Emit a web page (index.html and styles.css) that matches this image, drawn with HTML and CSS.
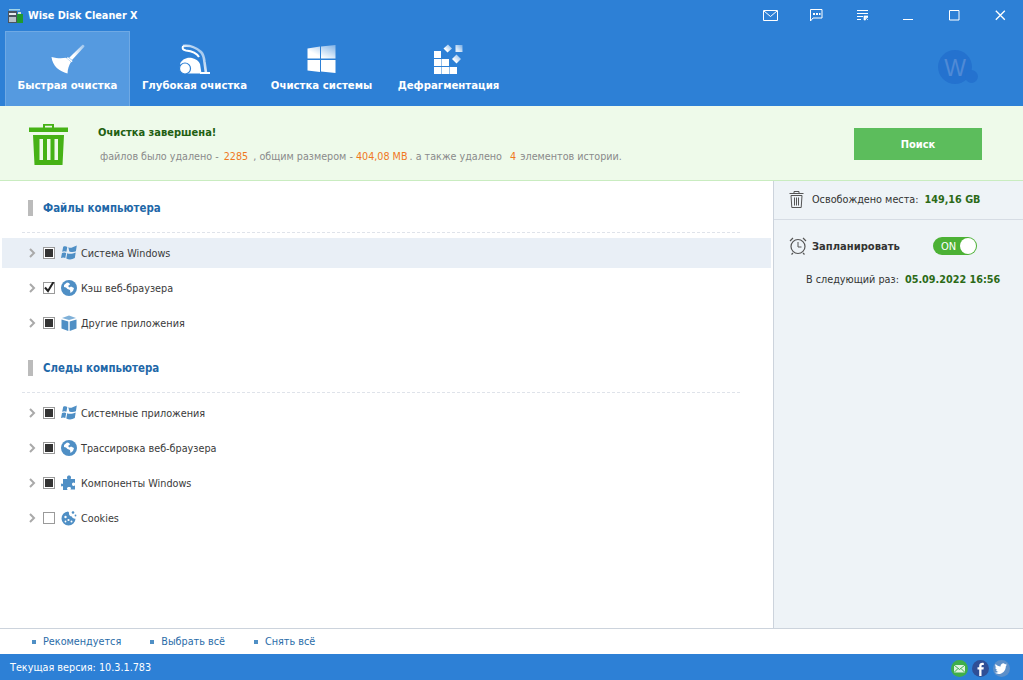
FILE: index.html
```html
<!DOCTYPE html>
<html lang="ru">
<head>
<meta charset="utf-8">
<title>Wise Disk Cleaner X</title>
<link rel="stylesheet" href="styles.css">
</head>
<body>
<svg class="defs" width="0" height="0" aria-hidden="true">
  <defs>
    <linearGradient id="fade" x1="0" y1="1" x2="1" y2="0"><stop offset="0.3" stop-color="#fff"/><stop offset="1" stop-color="#fff" stop-opacity=".4"/></linearGradient>
    <symbol id="i-win" viewBox="0 0 16 16"><path d="M2.200 1.800C3.500 1.200 4.900 1.200 6.300 1.900L5.400 6.800C4 6.100 2.600 6.100 1.200 6.800zM7.300 2.300C8.800 3 10.300 3 11.600 2.300L15.800.4 14.900 6.300C13 7.200 10.400 7.300 8.300 6.400zM1 7.900C2.400 7.200 3.900 7.200 5.200 7.900L4.300 13C3 12.300 1.500 12.300 0 13zM6.200 8.300C8 9.100 11.500 9.200 14.700 7.500L13.800 13C11 14.800 8 14.900 5.300 13.600z" fill="#4f8fc5"/></symbol>
    <symbol id="i-globe" viewBox="0 0 16 16"><circle cx="8" cy="8" r="8" fill="#4f8fc5"/><path d="M3 5l3-2.500 2 .5 1 1.500-2 1.500 1.500 1.500 1.500-1 3 1.500-1 3-2.500 2-.5-3-2.500-1-1.500-1.500-2-.5z" fill="#fff"/></symbol>
    <symbol id="i-box" viewBox="0 0 16 16"><path d="M1 3l7-2.500L15 3 8 5z" fill="#7fb0d8"/><path d="M.5 4.500L7.300 6.500V16L.5 13.500zM15.500 4.500L8.700 6.500V16l6.800-2.500z" fill="#4f8fc5"/></symbol>
    <symbol id="i-puzzle" viewBox="0 0 16 16"><path d="M6 2.500C6 1 7 .5 8 .5s2 .6 2 2c0 .8-.3 1-.3 1.500H14v4c-.5 0-.8-.5-1.500-.5-.9 0-1.500.8-1.500 1.800s.6 1.700 1.500 1.700c.7 0 1-.5 1.500-.5v4H9.500c0-.5.500-.8.500-1.500C10 12.500 9.200 12 8 12s-2 .5-2 1.500c0 .7.500 1 .5 1.500H2v-4c-.5 0-.8.500-1.200.5C.3 11.500 0 10.800 0 10s.3-1.500.8-1.500c.4 0 .7.500 1.200.500V4h4.300C6.300 3.500 6 3.300 6 2.500z" fill="#4f8fc5"/></symbol>
    <symbol id="i-cookie" viewBox="0 0 16 16"><path d="M7 1.500a7 7 0 1 0 7.500 7.200C13 9 11 8 11 6.500 9 6.500 7.500 4.500 8 2.500z" fill="#4f8fc5"/><circle cx="4.500" cy="7" r="1.200" fill="#fff"/><circle cx="7.500" cy="10" r="1.100" fill="#fff"/><circle cx="4.500" cy="11.500" r=".9" fill="#fff"/><circle cx="10.500" cy="11.500" r="1" fill="#fff"/><circle cx="12" cy="2.500" r="1.300" fill="#4f8fc5"/><circle cx="14.500" cy="5.500" r=".9" fill="#4f8fc5"/></symbol>
    <symbol id="i-chev" viewBox="0 0 8 10"><path d="M2 1l4 4-4 4" fill="none" stroke="#a9a9a9" stroke-width="2"/></symbol>
  </defs>
</svg>
<div class="app">
  <header class="top">
    <div class="titlebar">
      <svg class="appicon" viewBox="0 0 16 16" width="16" height="16"><path d="M2 1h11v1.500H2z" fill="#9fd4e8"/><rect x="1" y="3" width="9" height="12" fill="#4b5560"/><rect x="2" y="5" width="7" height="2" fill="#e8edf0"/><rect x="2" y="9" width="7" height="5" fill="#b8c2ca"/><rect x="10" y="6" width="6" height="9" fill="#1f9a2e"/><rect x="11" y="4" width="3" height="2" fill="#cfe8cf"/></svg>
      <span class="apptitle">Wise Disk Cleaner X</span>
      <div class="winbtns">
        <span class="winbtn"><svg width="15" height="11" viewBox="0 0 15 11"><path d="M.5.500h14v10H.5zM1 1l6.500 5.500L14 1" fill="none" stroke="#fff"/></svg></span>
        <span class="winbtn"><svg width="13" height="13" viewBox="0 0 13 13"><path d="M.5 12V.5h11.500v8.500H3z" fill="none" stroke="#fff"/><path d="M3 4h2v2H3zM6 4h2v2H6zM9 4h1.500v2H9z" fill="#fff"/></svg></span>
        <span class="winbtn"><svg width="11" height="11" viewBox="0 0 11 11"><path d="M0 .5h11M0 3.500h11M0 6.500h6M0 9.500h4" stroke="#fff" fill="none"/><path d="M7 6h4v1.500H8.500V10H7zM9 8l2 2" stroke="#fff" stroke-width=".7" fill="#fff"/></svg></span>
        <span class="winbtn"><svg width="11" height="11" viewBox="0 0 11 11"><path d="M0 9.500h10" stroke="#fff" fill="none"/></svg></span>
        <span class="winbtn"><svg width="11" height="11" viewBox="0 0 11 11"><path d="M.5.500h9.500v9.500H.5z" stroke="#fff" fill="none"/></svg></span>
        <span class="winbtn"><svg width="11" height="11" viewBox="0 0 11 11"><path d="M.8.800l9 9M9.800.800l-9 9" stroke="#fff" stroke-width="1.300" fill="none"/></svg></span>
      </div>
    </div>
    <nav class="tabs">
      <div class="tab active">
        <svg class="tabicon" viewBox="0 0 34 34" width="34" height="34"><path d="M31.500.8c1.200-.4 2.300.8 1.800 1.900L21 16l-2.800-2.300z" fill="url(#fade)"/><path d="M16.800 13l4.800 4-1 1.300-4.800-4z" fill="#fff"/><path d="M.5 13c5.500 1.500 10.500 1.500 14.500.8l5 4.200c-2 3-3.300 7-3.500 11.500C8.500 27.500 1.500 22 .5 13z" fill="#fff"/></svg>
        <span class="tablabel">Быстрая очистка</span>
      </div>
      <div class="tab">
        <svg class="tabicon" viewBox="0 0 34 34" width="34" height="34"><path d="M5 2C12 1 19 4 23 8c2 2 3 5 3.500 10L28 29" fill="none" stroke="url(#fade)" stroke-width="2.600"/><path d="M5 2C4 5 5 6 8 6.500c5 .5 10 1.500 13 6.500" fill="none" stroke="#fff" stroke-width="2"/><path d="M2 20c2-5 7-7 12-6 4 1 7 3 8 6l1.500 9.500H8z" fill="#fff"/><circle cx="7" cy="24.500" r="5.500" fill="#fff" stroke="#2d80d6" stroke-width="1.200"/><path d="M22 29h10" stroke="#fff" stroke-width="2"/></svg>
        <span class="tablabel">Глубокая очистка</span>
      </div>
      <div class="tab">
        <svg class="tabicon" viewBox="0 0 34 34" width="34" height="34"><path d="M2.500 4.500L15 2.600V14.500H2.500zM16 2.400L30.500 1V14.500H16z" fill="url(#fade)"/><path d="M2.500 16H15v12L2.500 26.500zM16 16h14.500v13L16 27.500z" fill="#fff"/></svg>
        <span class="tablabel">Очистка системы</span>
      </div>
      <div class="tab">
        <svg class="tabicon" viewBox="0 0 34 34" width="34" height="34"><path d="M2 7h7v7H2zM2 15h7v7H2zM9.500 15H17v7H9.500zM2 23h7v7H2zM9.500 23H17v7H9.500zM17.500 23H25v7h-7.500z" fill="#fff"/><path d="M11.500 4.500L16 .5l4 4-4.500 4z" fill="url(#fade)"/><path d="M23.500 1h7v7h-7z" fill="url(#fade)" opacity=".85"/><path d="M20 15l4.500-4.500L29 15l-4.500 4.500z" fill="url(#fade)"/></svg>
        <span class="tablabel">Дефрагментация</span>
      </div>
      <div class="logo">
        <span class="logodisc">W</span>
        <span class="logodot"></span>
      </div>
    </nav>
  </header>

  <section class="banner">
    <svg class="bin" viewBox="0 0 39 41" width="39" height="41"><path d="M15 4V.8h9V4" fill="none" stroke="#46b216" stroke-width="2"/><path d="M0 3.500h39v4.500H0z" fill="#46b216"/><path d="M4 11h31l-1.500 30h-28zM10.500 15v21h3.500V15zM18 15v21h3.500V15zM25.500 15v21H29V15z" fill="#46b216" fill-rule="evenodd"/></svg>
    <div class="bannertext">
      <div class="donetitle">Очистка завершена!</div>
      <div class="donestats">файлов было удалено - <b>2285</b> , общим размером - <b class="size">404,08 MB</b> . а также удалено <b class="four">4</b> элементов истории.</div>
    </div>
    <button class="search">Поиск</button>
  </section>

  <main class="content">
    <div class="lists">
      <section class="group">
        <h2 class="grouphead"><span class="groupname">Файлы компьютера</span></h2>
        <div class="row selected"><svg class="chev"><use href="#i-chev"/></svg><span class="check mixed"></span><svg class="ico"><use href="#i-win"/></svg><span class="rowlabel">Система Windows</span></div>
        <div class="row"><svg class="chev"><use href="#i-chev"/></svg><span class="check"><svg width="12" height="12" viewBox="0 0 12 12"><path d="M2 5.500l3 3.500 5.500-9" fill="none" stroke="#222" stroke-width="2"/></svg></span><svg class="ico"><use href="#i-globe"/></svg><span class="rowlabel">Кэш веб-браузера</span></div>
        <div class="row"><svg class="chev"><use href="#i-chev"/></svg><span class="check mixed"></span><svg class="ico"><use href="#i-box"/></svg><span class="rowlabel">Другие приложения</span></div>
      </section>
      <section class="group">
        <h2 class="grouphead"><span class="groupname">Следы компьютера</span></h2>
        <div class="row"><svg class="chev"><use href="#i-chev"/></svg><span class="check mixed"></span><svg class="ico"><use href="#i-win"/></svg><span class="rowlabel">Системные приложения</span></div>
        <div class="row"><svg class="chev"><use href="#i-chev"/></svg><span class="check mixed"></span><svg class="ico"><use href="#i-globe"/></svg><span class="rowlabel">Трассировка веб-браузера</span></div>
        <div class="row"><svg class="chev"><use href="#i-chev"/></svg><span class="check mixed"></span><svg class="ico"><use href="#i-puzzle"/></svg><span class="rowlabel">Компоненты Windows</span></div>
        <div class="row"><svg class="chev"><use href="#i-chev"/></svg><span class="check"></span><svg class="ico"><use href="#i-cookie"/></svg><span class="rowlabel">Cookies</span></div>
      </section>
    </div>
    <aside class="side">
      <div class="freed">
        <svg width="15" height="17" viewBox="0 0 15 17"><path d="M5 2V.5h5V2M.5 2.500h14M2 4.500h11l-.8 12H2.800zM5.500 6.500v8M7.500 6.500v8M9.500 6.500v8" fill="none" stroke="#555"/></svg>
        <span class="sidetext">Освобождено места:</span>
        <b class="greenval">149,16 GB</b>
      </div>
      <div class="sched">
        <div class="schedrow">
          <svg width="18" height="18" viewBox="0 0 18 18"><circle cx="9" cy="9.500" r="7" fill="none" stroke="#555" stroke-width="1.200"/><path d="M9 5v5H12.500" fill="none" stroke="#555"/><path d="M1 4l3-3M17 4l-3-3M4 16l-1.500 1.500M14 16l1.500 1.500" stroke="#555" stroke-width="1.200"/></svg>
          <b class="schedname">Запланировать</b>
          <span class="toggle"><span class="toggletext">ON</span><span class="knob"></span></span>
        </div>
        <div class="nextrun"><span class="sidetext">В следующий раз:</span><b class="greenval">05.09.2022 16:56</b></div>
      </div>
    </aside>
  </main>

  <div class="links">
    <a class="link">Рекомендуется</a>
    <a class="link">Выбрать всё</a>
    <a class="link">Снять всё</a>
  </div>

  <footer class="status">
    <span>Текущая версия: 10.3.1.783</span>
    <div class="social">
      <svg width="17" height="17" viewBox="0 0 17 17"><circle cx="8.500" cy="8.500" r="8.500" fill="#3fae49"/><path d="M3 5h11v7.500H3z" fill="#dff3df"/><path d="M3 5l5.500 4.500L14 5M3 12.500L7 8.500M14 12.500L10 8.500" fill="none" stroke="#3fae49"/></svg>
      <svg width="17" height="17" viewBox="0 0 17 17"><circle cx="8.500" cy="8.500" r="8.500" fill="#2f4f96"/><path d="M9.500 16V9.500h2l.3-2.300H9.500V6c0-.7.3-1.100 1.100-1.100h1.200V2.900c-2.900-.4-4.600.4-4.600 2.900v1.400H5.500v2.300h1.700V16z" fill="#fff"/></svg>
      <svg width="17" height="17" viewBox="0 0 17 17"><circle cx="8.500" cy="8.500" r="8.500" fill="#5c8fc9"/><path d="M14 4.500c-.5.300-1 .4-1.500.5.500-.3.900-.8 1.100-1.400-.5.300-1 .5-1.600.6a2.600 2.600 0 0 0-4.400 2.400C5.500 6.500 3.800 5.600 2.600 4.100c-.7 1.200-.3 2.700.8 3.500-.4 0-.8-.1-1.100-.3 0 1.300.9 2.300 2 2.600-.4.100-.8.100-1.200 0 .3 1 1.300 1.800 2.400 1.800-1.100.9-2.400 1.200-3.800 1.100 4.500 2.800 11 .3 11.200-6.900.5-.4.900-.8 1.100-1.400z" fill="#fff"/></svg>
    </div>
  </footer>
</div>
</body>
</html>
```
FILE: styles.css
```css
* { box-sizing: border-box; }
html, body { margin: 0; height: 100%; }
body {
  font-family: "DejaVu Sans Condensed", "DejaVu Sans", sans-serif;
  font-stretch: condensed;
  font-size: 10.75px;
  color: #333;
  overflow: hidden;
}
.defs { position: absolute; }
.app { width: 1023px; height: 680px; display: flex; flex-direction: column; }

.top { background: #2d80d6; height: 106px; color: #fff; flex: none; }
.titlebar { height: 31px; display: flex; align-items: center; padding-left: 7px; }
.appicon { margin-right: 5px; }
.apptitle { font-weight: 700; font-size: 10.8px; }
.winbtns { margin-left: auto; display: flex; }
.winbtn { width: 46px; height: 31px; display: flex; align-items: center; justify-content: center; }

.tabs { height: 75px; display: flex; padding-left: 5px; gap: 2px; }
.tab { width: 125px; display: flex; flex-direction: column; align-items: center; padding-top: 12px; border: 1px solid transparent; border-bottom: 0; }
.tab.active { background: #559ae0; border-color: #6fa9e4; }
.tabicon { display: block; }
.tablabel { margin-top: 1px; font-weight: 700; font-size: 11.3px; white-space: nowrap; }
.logo { margin-left: auto; margin-right: 45px; margin-top: 19px; display: flex; height: 34px; align-items: flex-end; }
.logodisc { width: 34px; height: 34px; border-radius: 50%; background: #2472cf; color: #4f8ad6; font: 400 23px/36px "Liberation Sans", sans-serif; text-align: center; }
.logodot { width: 13px; height: 13px; border-radius: 50%; background: #2472cf; margin-left: -7px; margin-bottom: 1px; }

.banner { height: 75px; flex: none; background: #eefaea; border-bottom: 1px solid #c9ecc0; display: flex; align-items: center; padding-left: 29px; }
.bin { flex: none; margin-top: 2px; }
.bannertext { margin-left: 30px; padding-top: 2px; display: flex; flex-direction: column; gap: 11px; width: 756px; }
.donetitle { font-weight: 700; color: #1f6012; font-size: 11px; }
.donestats { color: #8a8a8a; padding-left: 2px; font-size: 10.7px; }
.donestats b { font-weight: 400; color: #f0781e; margin: 0 2px; }
.donestats b.size { margin: 0 -1px 0 0; }
.donestats b.four { margin: 0 1px 0 5px; }
.search { width: 128px; height: 32px; margin-top: 2px; background: #5cbd5c; color: #fff; border: 0; font: 700 11px "DejaVu Sans Condensed", "DejaVu Sans", sans-serif; font-stretch: condensed; flex: none; }

.content { flex: 1; display: flex; min-height: 0; }
.lists { flex: 1; padding: 1px 0 0 2px; }
.group { margin-bottom: 4px; display: flex; flex-direction: column; gap: 5px; }
.grouphead { margin: 0 33px 0 20px; height: 51px; border-bottom: 1px dashed #dfe3ea; display: flex; align-items: flex-start; padding: 18px 0 0 6px; font-size: 11px; }
.groupname { border-left: 5px solid #bbb; height: 16px; padding-left: 10px; line-height: 17px; color: #1f68a8; font-weight: 700; font-size: 11.4px; }
.row { height: 30px; display: flex; align-items: center; margin-right: 2px; }
.row.selected { background: #e9eff6; }
.chev { width: 8px; height: 10px; margin-left: 26px; flex: none; }
.check { width: 12px; height: 12px; margin-left: 7px; border: 1px solid #9a9a9a; background: #fff; flex: none; display: flex; align-items: center; justify-content: center; }
.check svg { flex: none; }
.check.mixed::after { content: ""; width: 8px; height: 8px; background: #333; }
.ico { width: 16px; height: 16px; margin-left: 6px; flex: none; }
.rowlabel { margin-left: 4px; color: #3a3a3a; }

.side { width: 250px; flex: none; background: #eef3f7; border-left: 1px solid #ccd3dc; }
.freed { height: 39px; border-bottom: 1px solid #d6dce4; display: flex; align-items: center; padding: 0 0 2px 15px; }
.freed .sidetext { margin-left: 8px; }
.greenval { color: #2c6a17; font-weight: 700; margin-left: 6px; }
.sched { padding-top: 17px; }
.schedrow { display: flex; align-items: center; padding-left: 15px; height: 18px; }
.schedname { margin-left: 5px; font-weight: 700; width: 121px; color: #333; font-size: 11.1px; }
.toggle { width: 44px; height: 18px; border-radius: 9px; background: #4cb135; color: #fff; display: flex; align-items: center; justify-content: space-between; padding: 0 1px 0 8px; }
.toggletext { font-size: 11px; }
.knob { width: 16px; height: 16px; border-radius: 50%; background: #fff; }
.nextrun { margin-top: 18px; padding-left: 32px; }

.links { height: 26px; flex: none; border-top: 1px solid #ccd3dc; display: flex; align-items: center; padding-left: 32px; background: #fff; }
.link { color: #2a6ca8; display: flex; align-items: center; margin-right: 29px; }
.link::before { content: ""; width: 4px; height: 4px; background: #4f8fc5; margin-right: 7px; }

.status { height: 26px; flex: none; background: #2d80d6; color: #fff; display: flex; align-items: center; justify-content: space-between; padding: 0 13px 0 10px; }
.social { display: flex; gap: 4px; padding-top: 2px; }
```
